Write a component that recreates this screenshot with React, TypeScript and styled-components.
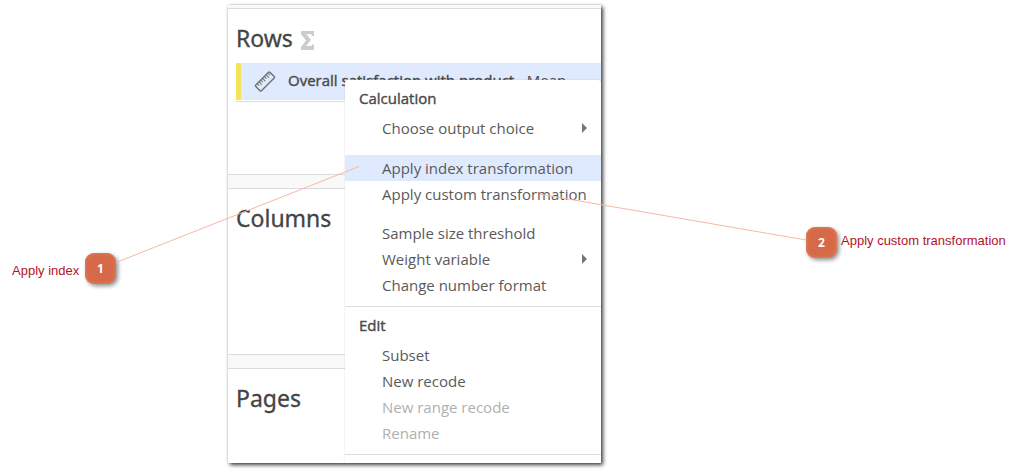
import React from 'react';
import styled, { createGlobalStyle, css } from 'styled-components';

const GlobalStyle = createGlobalStyle`
  * { box-sizing: border-box; }
  body { margin: 0; background: #fff; }
`;

const Figure = styled.main`
  position: relative;
  display: flex;
  align-items: flex-start;
  padding: 5px 0 9px;
  font-family: 'Open Sans', sans-serif;
  color: #4a4a4a;
`;

const CalloutColumn = styled.div<{ $side: 'left' | 'right' }>`
  display: flex;
  align-items: center;
  gap: 4px;
  ${(p) =>
    p.$side === 'left'
      ? css`
          flex: 0 0 228px;
          padding: 248px 112px 0 12px;
          justify-content: space-between;
        `
      : css`
          flex: 1;
          padding: 222px 0 0 205px;
        `}
`;

const CalloutText = styled.span<{ $low?: boolean }>`
  padding: ${(p) => (p.$low ? '4px 0 0' : '0 0 4px')};
  font: 13px/16px 'Liberation Sans', Arial, sans-serif;
  color: #b5121f;
  white-space: nowrap;
`;

const Badge = styled.span`
  flex: none;
  display: flex;
  align-items: center;
  justify-content: center;
  width: 31px;
  height: 31px;
  border-radius: 9px;
  background: #d66a48;
  box-shadow: inset 0 0 3px 1px #dd7f5c, 2px 2px 4px rgba(0, 0, 0, 0.45);
  color: #fff;
  font: bold 12px/16px 'Open Sans', sans-serif;
`;

const Leaders = styled.svg`
  position: absolute;
  left: 0;
  top: 0;
  pointer-events: none;
`;

const Panel = styled.section`
  position: relative;
  background: #fff;
  overflow: hidden;
`;

const PanelShadow = styled.div`
  flex: 0 0 373px;
  box-shadow: 2px 2px 4px rgba(0, 0, 0, 0.75), 0 0 2px rgba(0, 0, 0, 0.2);
`;

const Strip = styled.div<{ $first?: boolean }>`
  height: ${(p) => (p.$first ? 4 : 15)}px;
  background: #f9f9f9;
  border-bottom: 1px solid #dcdcdc;
  border-top: ${(p) => (p.$first ? 0 : 1)}px solid #dcdcdc;
`;

const Shelf = styled.div<{ $last?: boolean }>`
  height: ${(p) => (p.$last ? 94 : 165)}px;
  padding: 11px 0 0 8px;
`;

const ShelfTitle = styled.h2`
  display: flex;
  align-items: center;
  gap: 8px;
  margin: 0 0 7px;
  font: 400 23px/36px 'Noto Sans', sans-serif;
  color: #444;
  -webkit-text-stroke: 0.3px #444;
`;

const Variable = styled.div`
  display: flex;
  align-items: center;
  height: 37px;
  padding: 0 0 3px 14px;
  border-left: 5px solid #f3e45c;
  background: #e0eafe;
  box-shadow: 0 1px #fff, 0 2px #dcdcdc;
  font-size: 15px;
  line-height: 20px;
  white-space: pre;
`;

const VariableName = styled.span`
  margin-left: 13px;
  -webkit-text-stroke: 0.4px #4a4a4a;
`;

const Menu = styled.div`
  position: absolute;
  left: 117px;
  right: 0;
  top: 75px;
  bottom: 0;
  background: #fff;
  border-radius: 3px 3px 0 0;
  box-shadow: 0 0 2px rgba(0, 0, 0, 0.15);
`;

const MenuHeading = styled.h3`
  margin: 0;
  padding: 2px 14px 0;
  font-size: 15px;
  font-weight: 400;
  line-height: 33px;
  -webkit-text-stroke: 0.4px #4a4a4a;
`;

const MenuGroup = styled.div`
  margin-bottom: 13px;
  &:first-of-type { margin-bottom: 14px; }
  &:last-child { margin-bottom: 8px; }
`;

const MenuSection = styled.section`
  border-bottom: 1px solid #dcdcdc;
`;

const MenuItem = styled.button<{ $active?: boolean }>`
  display: flex;
  align-items: center;
  justify-content: space-between;
  width: 100%;
  height: 26px;
  padding: 0 14px 0 37px;
  border: 0;
  background: ${(p) => (p.$active ? '#e0eafe' : 'transparent')};
  color: #5a5a5a;
  font: 15px/20px 'Open Sans', sans-serif;
  text-align: left;
  white-space: nowrap;
  &:disabled { color: #b0b0b0; }
`;

const Arrow = () => (
  <svg width="5" height="10" viewBox="0 0 5 10" aria-hidden="true">
    <path d="M0 0L5 5L0 10Z" fill="#777" />
  </svg>
);

const Sigma = () => (
  <svg width="13" height="19" viewBox="0 0 13 19" overflow="visible" aria-hidden="true">
    <path d="M0 2H13V7H11L10 5H5.500L10 11L5 17H10.500L11 15.500H13V21H0V18L5 11.500L0 5Z" fill="#ccc" />
  </svg>
);

const Ruler = () => (
  <svg width="20" height="20" viewBox="0 0 20 20" fill="none" stroke="#707070" strokeWidth="1.4" overflow="visible" aria-hidden="true">
    <g transform="translate(10 11.500) rotate(-45)">
      <rect x="-10" y="-4" width="20" height="8" rx="1" />
      <path d="M-7 -4v3M-4.500 -4v4M-2 -4v3M0.500 -4v4M3 -4v3M5.500 -4v4M8 -4v3" strokeWidth="1" />
    </g>
  </svg>
);

export default function App() {
  return (
    <Figure>
      <GlobalStyle />
      <CalloutColumn $side="left">
        <CalloutText $low>Apply index</CalloutText>
        <Badge>1</Badge>
      </CalloutColumn>
      <PanelShadow>
        <Panel>
          <Strip $first />
          <Shelf>
            <ShelfTitle>
              Rows <Sigma />
            </ShelfTitle>
            <Variable>
              <Ruler />
              <VariableName>Overall satisfaction with product</VariableName> - Mean
            </Variable>
          </Shelf>
          <Strip />
          <Shelf>
            <ShelfTitle>Columns</ShelfTitle>
          </Shelf>
          <Strip />
          <Shelf $last>
            <ShelfTitle>Pages</ShelfTitle>
          </Shelf>
          <Menu>
            <MenuSection>
              <MenuHeading>Calculation</MenuHeading>
              <MenuGroup>
                <MenuItem>
                  Choose output choice <Arrow />
                </MenuItem>
              </MenuGroup>
              <MenuGroup>
                <MenuItem $active>Apply index transformation</MenuItem>
                <MenuItem>Apply custom transformation</MenuItem>
              </MenuGroup>
              <MenuGroup>
                <MenuItem>Sample size threshold</MenuItem>
                <MenuItem>
                  Weight variable <Arrow />
                </MenuItem>
                <MenuItem>Change number format</MenuItem>
              </MenuGroup>
            </MenuSection>
            <MenuSection>
              <MenuHeading>Edit</MenuHeading>
              <MenuGroup>
                <MenuItem>Subset</MenuItem>
                <MenuItem>New recode</MenuItem>
                <MenuItem disabled>New range recode</MenuItem>
                <MenuItem disabled>Rename</MenuItem>
              </MenuGroup>
            </MenuSection>
          </Menu>
        </Panel>
      </PanelShadow>
      <CalloutColumn $side="right">
        <Badge>2</Badge>
        <CalloutText>Apply custom transformation</CalloutText>
      </CalloutColumn>
      <Leaders width="810" height="300" viewBox="0 0 810 300" stroke="#f5b8a6" strokeWidth="1" aria-hidden="true">
        <path d="M116 262.500L359 166.500M539 194L806 240" />
      </Leaders>
    </Figure>
  );
}
